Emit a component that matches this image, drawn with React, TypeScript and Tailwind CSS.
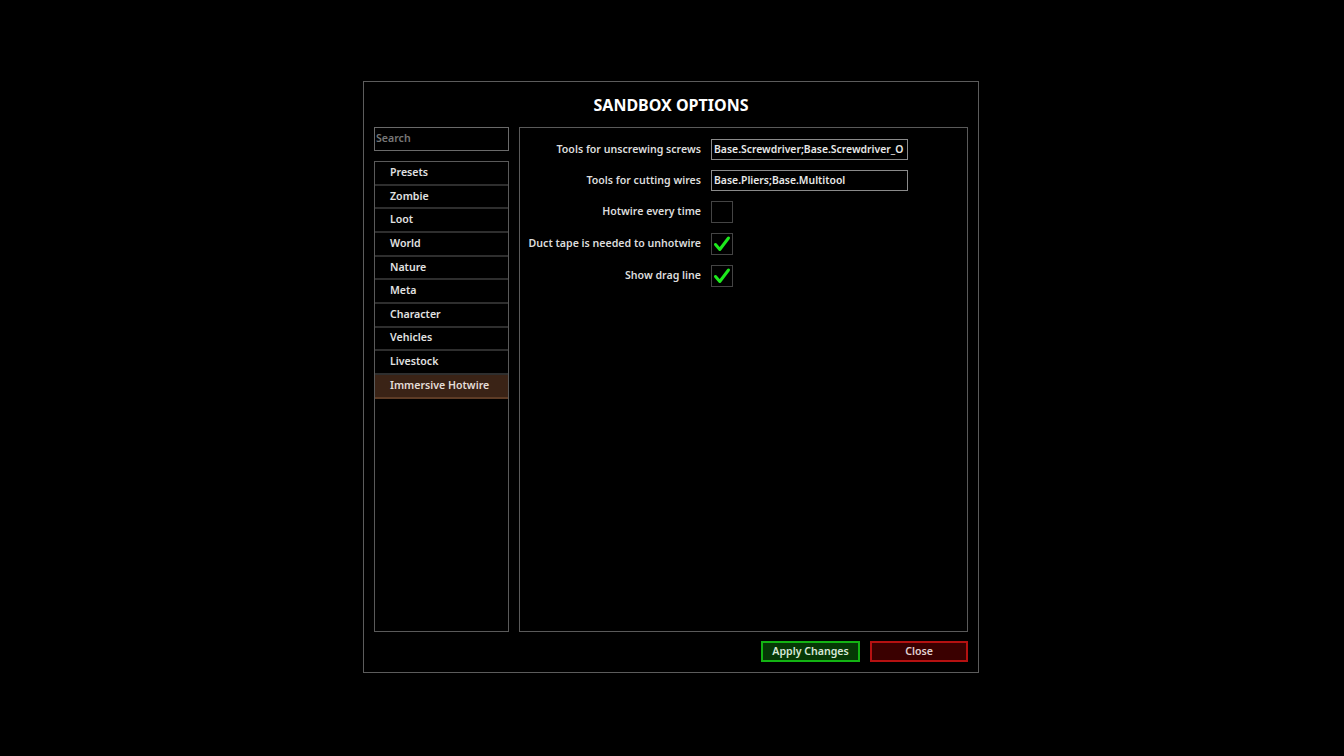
import React from "react";

const cats = [
  "Presets",
  "Zombie",
  "Loot",
  "World",
  "Nature",
  "Meta",
  "Character",
  "Vehicles",
  "Livestock",
  "Immersive Hotwire",
];

function Check({ on }: { on: boolean }) {
  return (
    <div className="w-[22px] h-[22px] border border-[#444444] bg-black flex items-center justify-center">
      {on && (
        <svg width="18" height="18" viewBox="0 0 18 18">
          <path d="M2.5 9.5 L6.8 14.5 L15.5 3" fill="none" stroke="#1de91d" strokeWidth="3" strokeLinecap="round" strokeLinejoin="round" />
        </svg>
      )}
    </div>
  );
}

function Row({ label, children }: { label: string; children: React.ReactNode }) {
  return (
    <div className="flex items-center">
      <div className="w-[181px] text-right text-[10.6px] font-semibold text-[#dcdcdc]">{label}</div>
      <div className="ml-[10px]">{children}</div>
    </div>
  );
}

function Input({ value }: { value: string }) {
  return (
    <div className="w-[197px] h-[21px] border border-[#8a8a8a] bg-black text-[10.4px] font-semibold text-[#e8e8e8] pl-[2px] leading-[19px] overflow-hidden whitespace-nowrap">
      {value}
    </div>
  );
}

export default function App() {
  return (
    <div
      className="w-full h-[756px] bg-black pt-[81px] pl-[363px]"
      style={{ fontFamily: '"Noto Sans", "Open Sans", sans-serif' }}
    >
      <div className="w-[616px] h-[592px] border border-[#5c5c5c] flex flex-col px-[10px]">
        <div className="h-[45px] flex items-center justify-center">
          <span className="text-[16px] font-bold text-white">SANDBOX OPTIONS</span>
        </div>
        <div className="flex gap-[10px] h-[505px]">
          <div className="w-[135px] flex flex-col gap-[10px]">
            <div className="h-[24px] border border-[#6a6a6a] text-[10.6px] font-semibold text-[#777] pl-[1px] leading-[20px]">
              Search
            </div>
            <div className="flex-1 border border-[#5a5a5a]">
              {cats.map((c) => {
                const sel = c === "Immersive Hotwire";
                return (
                  <div
                    key={c}
                    className={
                      sel
                        ? "h-[23.67px] bg-[#3a2316] border-b-[2px] border-[#5e3c26] pl-[15px] text-[10.6px] font-semibold text-[#e4ddd8] flex items-center"
                        : "h-[23.67px] bg-black border-b-[2.67px] border-[#2e2e2e] pl-[15px] text-[10.6px] font-semibold text-[#e2e2e2] flex items-center"
                    }
                  >
                    {c}
                  </div>
                );
              })}
            </div>
          </div>
          <div className="flex-1 border border-[#5a5a5a] pt-[11px] flex flex-col gap-[10px]">
            <Row label="Tools for unscrewing screws">
              <Input value="Base.Screwdriver;Base.Screwdriver_O" />
            </Row>
            <Row label="Tools for cutting wires">
              <Input value="Base.Pliers;Base.Multitool" />
            </Row>
            <Row label="Hotwire every time">
              <Check on={false} />
            </Row>
            <Row label="Duct tape is needed to unhotwire">
              <Check on={true} />
            </Row>
            <Row label="Show drag line">
              <Check on={true} />
            </Row>
          </div>
        </div>
        <div className="flex justify-end gap-[10px] mt-[9px]">
          <div className="w-[99px] h-[21px] border-2 border-[#13b313] bg-[#053805] text-[10.6px] font-semibold text-[#d8e8d8] flex items-center justify-center">
            Apply Changes
          </div>
          <div className="w-[98px] h-[21px] border-2 border-[#b51111] bg-[#3a0000] text-[10.6px] font-semibold text-[#e0d0d0] flex items-center justify-center">
            Close
          </div>
        </div>
      </div>
    </div>
  );
}
